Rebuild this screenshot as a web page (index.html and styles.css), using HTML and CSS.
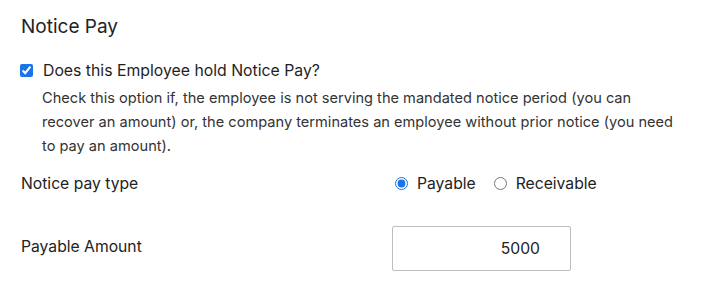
FILE: index.html
```html
<!DOCTYPE html>
<html>
<head>
<meta charset="utf-8">
<link rel="stylesheet" href="styles.css">
</head>
<body>
<section class="panel">
  <h2 class="title">Notice Pay</h2>
  <label class="check-row">
    <input type="checkbox" class="check" checked>
    <span class="check-label">Does this Employee hold Notice Pay?</span>
  </label>
  <p class="help">Check this option if, the employee is not serving the mandated notice period (you can recover an amount) or, the company terminates an employee without prior notice (you need to pay an amount).</p>
  <div class="field">
    <div class="field-label">Notice pay type</div>
    <div class="radios">
      <label class="radio-opt"><input type="radio" name="t" class="radio" checked><span>Payable</span></label>
      <label class="radio-opt"><input type="radio" name="t" class="radio"><span>Receivable</span></label>
    </div>
  </div>
  <div class="field field-amount">
    <div class="field-label label-amount">Payable Amount</div>
    <div class="amount">5000</div>
  </div>
</section>
</body>
</html>
```

FILE: styles.css
```css
html, body {
  margin: 0;
  padding: 0;
  background: #fff;
}
body {
  font-family: Inter, "Noto Sans", sans-serif;
  color: #222;
}
.panel {
  padding: 13px 20px 0 20px;
}
.title {
  margin: 0;
  font-size: 19px;
  font-weight: 400;
  line-height: 28px;
  color: #222;
  padding-left: 1px;
}
.check-row {
  display: flex;
  align-items: center;
  margin-top: 17px;
  height: 24px;
}
.check {
  width: 13px;
  height: 13px;
  margin: 0 10px 0 0;
  accent-color: #1a73e8;
}
.check-label {
  font-size: 15.8px;
  font-weight: 400;
  color: #1e1e1e;
}
.help {
  margin: 4px 0 0 22px;
  font-size: 14.6px;
  line-height: 24px;
  color: #333;
  width: 640px;
}
.field {
  display: grid;
  grid-template-columns: 372px auto;
  align-items: center;
  margin-top: 10px;
  height: 30px;
}
.field-label {
  font-size: 15.7px;
  color: #222;
  padding-left: 1px;
}
.label-amount {
  padding-bottom: 4px;
}
.radios {
  display: flex;
  align-items: center;
  gap: 15px;
}
.radio-opt {
  display: flex;
  align-items: center;
  font-size: 15.7px;
  color: #222;
}
.radio {
  width: 13px;
  height: 13px;
  margin: 0 9px 0 3px;
  accent-color: #1a73e8;
}
.field-amount {
  margin-top: 28px;
  height: 45px;
}
.amount {
  width: 147px;
  height: 43px;
  padding-right: 30px;
  border: 1px solid #bdbdbd;
  border-radius: 2px;
  font-size: 15.7px;
  line-height: 43px;
  text-align: right;
}
```
